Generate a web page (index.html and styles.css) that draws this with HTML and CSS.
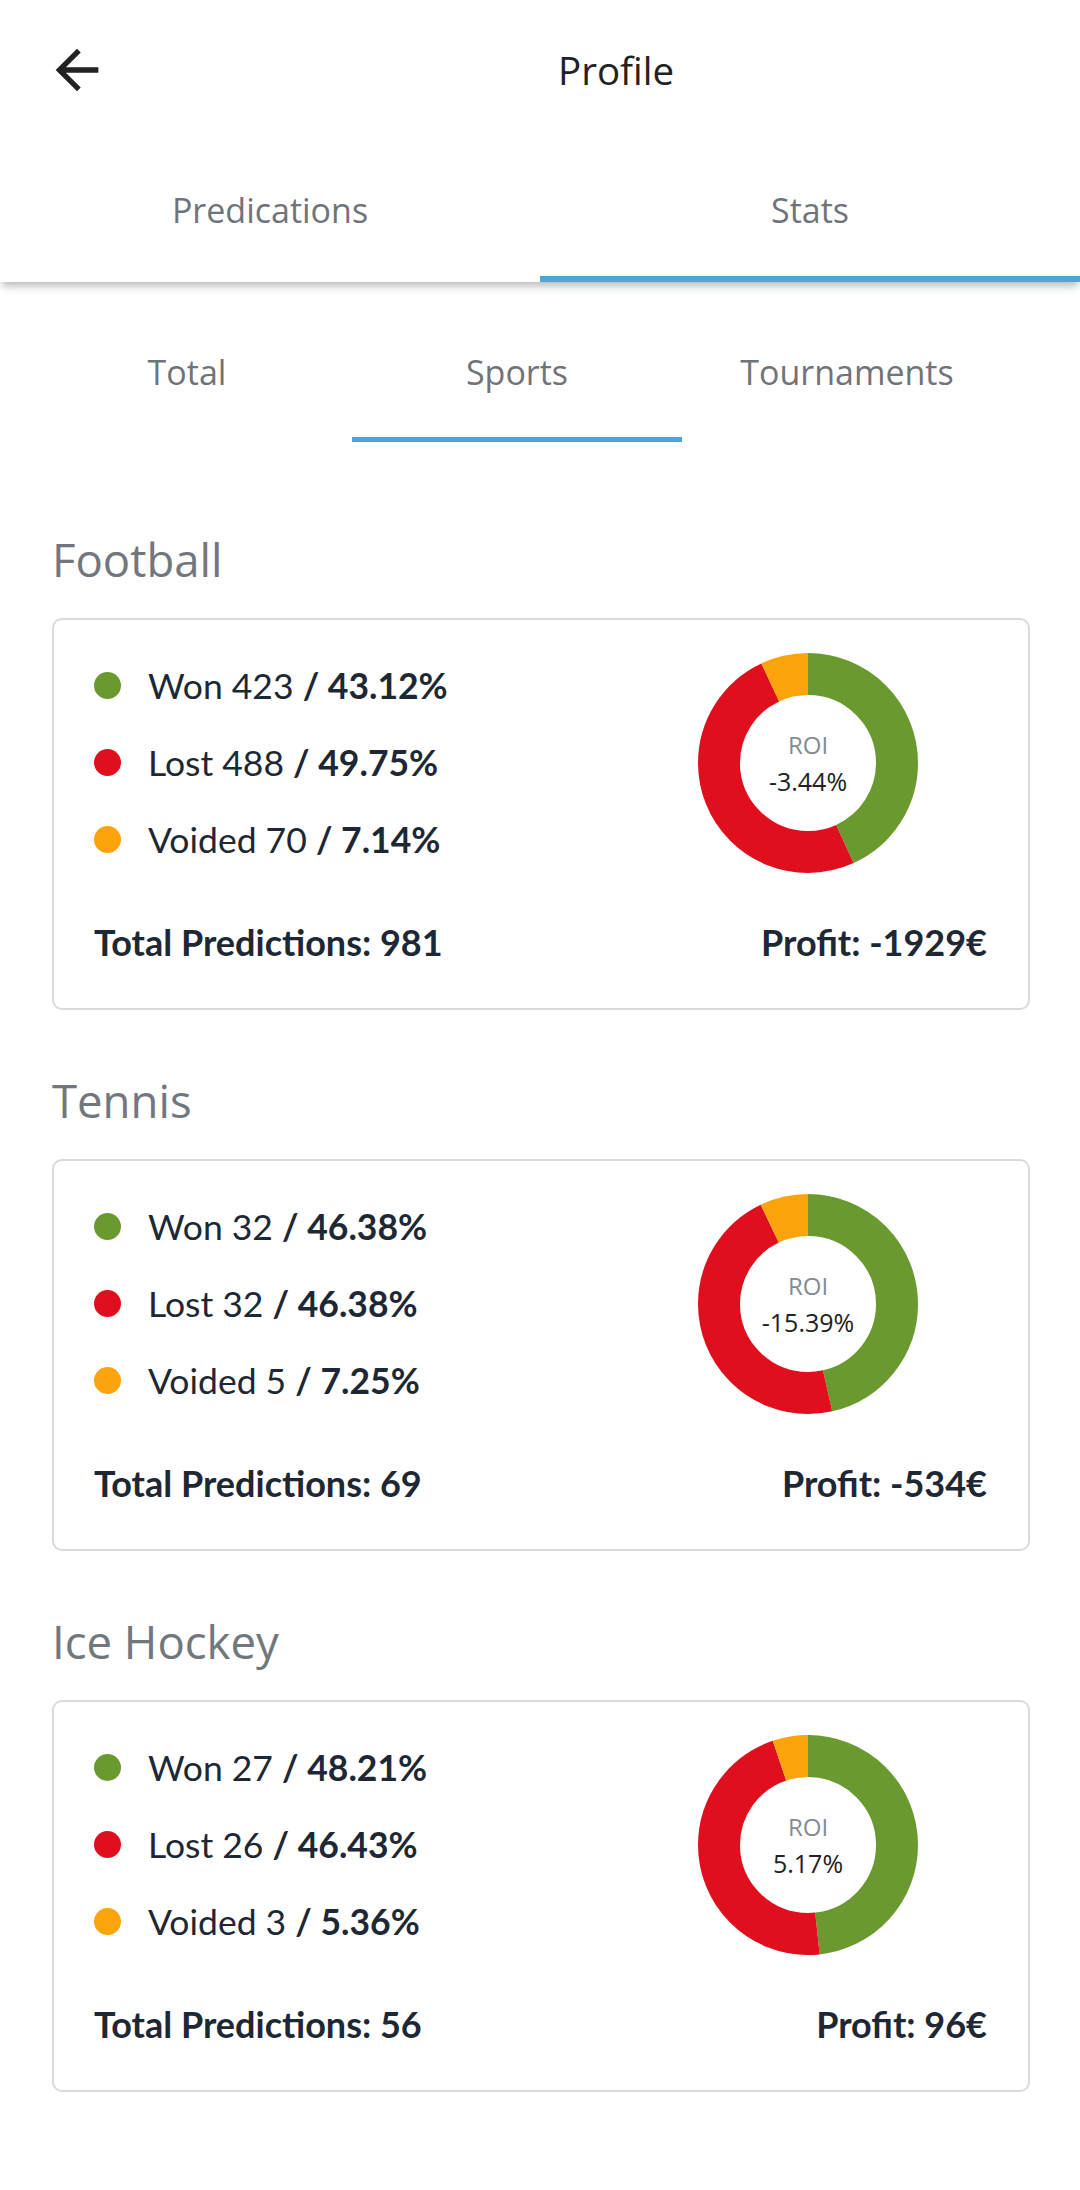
FILE: index.html
```html
<!DOCTYPE html>
<html lang="en">
<head>
<meta charset="utf-8">
<title>Profile</title>
<link rel="stylesheet" href="styles.css">
</head>
<body>
<header class="toolbar">
  <svg class="back" viewBox="0 0 24 24" aria-hidden="true"><path d="M20 11H7.83l5.59-5.59L12 4l-8 8 8 8 1.41-1.41L7.83 13H20v-2z"/></svg>
  <h1 class="title">Profile</h1>
</header>
<nav class="tabs">
  <div class="tab">Predications</div>
  <div class="tab active">Stats</div>
</nav>
<nav class="subtabs">
  <div class="subtab">Total</div>
  <div class="subtab active">Sports</div>
  <div class="subtab">Tournaments</div>
</nav>

<main class="content">
  <section class="sport">
    <h2 class="sport-title">Football</h2>
    <div class="card">
      <div class="card-top">
        <ul class="legend">
          <li class="row"><span class="dot won"></span>Won 423 <b>/ 43.12%</b></li>
          <li class="row"><span class="dot lost"></span>Lost 488 <b>/ 49.75%</b></li>
          <li class="row"><span class="dot void"></span>Voided 70 <b>/ 7.14%</b></li>
        </ul>
        <div class="donut">
          <svg viewBox="0 0 220 220">
            <g transform="rotate(-90 110 110)">
              <circle class="seg won" cx="110" cy="110" r="89" stroke-dasharray="241.13 559.2" stroke-dashoffset="0"/>
              <circle class="seg lost" cx="110" cy="110" r="89" stroke-dasharray="278.2 559.2" stroke-dashoffset="-241.13"/>
              <circle class="seg void" cx="110" cy="110" r="89" stroke-dasharray="39.93 559.2" stroke-dashoffset="-519.33"/>
            </g>
          </svg>
          <div class="roi"><span class="roi-label">ROI</span><span class="roi-value">-3.44%</span></div>
        </div>
      </div>
      <div class="card-foot">
        <span>Total Predictions: 981</span>
        <span>Profit: -1929€</span>
      </div>
    </div>
  </section>

  <section class="sport">
    <h2 class="sport-title">Tennis</h2>
    <div class="card">
      <div class="card-top">
        <ul class="legend">
          <li class="row"><span class="dot won"></span>Won 32 <b>/ 46.38%</b></li>
          <li class="row"><span class="dot lost"></span>Lost 32 <b>/ 46.38%</b></li>
          <li class="row"><span class="dot void"></span>Voided 5 <b>/ 7.25%</b></li>
        </ul>
        <div class="donut">
          <svg viewBox="0 0 220 220">
            <g transform="rotate(-90 110 110)">
              <circle class="seg won" cx="110" cy="110" r="89" stroke-dasharray="259.36 559.2" stroke-dashoffset="0"/>
              <circle class="seg lost" cx="110" cy="110" r="89" stroke-dasharray="259.36 559.2" stroke-dashoffset="-259.36"/>
              <circle class="seg void" cx="110" cy="110" r="89" stroke-dasharray="40.54 559.2" stroke-dashoffset="-518.72"/>
            </g>
          </svg>
          <div class="roi"><span class="roi-label">ROI</span><span class="roi-value">-15.39%</span></div>
        </div>
      </div>
      <div class="card-foot">
        <span>Total Predictions: 69</span>
        <span>Profit: -534€</span>
      </div>
    </div>
  </section>

  <section class="sport">
    <h2 class="sport-title">Ice Hockey</h2>
    <div class="card">
      <div class="card-top">
        <ul class="legend">
          <li class="row"><span class="dot won"></span>Won 27 <b>/ 48.21%</b></li>
          <li class="row"><span class="dot lost"></span>Lost 26 <b>/ 46.43%</b></li>
          <li class="row"><span class="dot void"></span>Voided 3 <b>/ 5.36%</b></li>
        </ul>
        <div class="donut">
          <svg viewBox="0 0 220 220">
            <g transform="rotate(-90 110 110)">
              <circle class="seg won" cx="110" cy="110" r="89" stroke-dasharray="269.59 559.2" stroke-dashoffset="0"/>
              <circle class="seg lost" cx="110" cy="110" r="89" stroke-dasharray="259.64 559.2" stroke-dashoffset="-269.59"/>
              <circle class="seg void" cx="110" cy="110" r="89" stroke-dasharray="29.97 559.2" stroke-dashoffset="-529.23"/>
            </g>
          </svg>
          <div class="roi"><span class="roi-label">ROI</span><span class="roi-value">5.17%</span></div>
        </div>
      </div>
      <div class="card-foot">
        <span>Total Predictions: 56</span>
        <span>Profit: 96€</span>
      </div>
    </div>
  </section>
</main>
</body>
</html>
```

FILE: styles.css
```css
* { box-sizing: border-box; }

html, body {
  margin: 0;
  padding: 0;
  background: #ffffff;
}

body {
  width: 1080px;
  min-height: 2190px;
  font-family: "Open Sans", "Noto Sans", sans-serif;
  color: #212121;
}

/* Toolbar */
.toolbar {
  height: 140px;
  display: flex;
  align-items: center;
  padding-left: 45px;
}

.back {
  width: 64px;
  height: 64px;
  fill: #222222;
  flex: none;
}

.title {
  margin: 0 0 0 449px;
  font-size: 38.5px;
  font-weight: 400;
  line-height: 1;
  color: #222222;
}

/* Main tabs */
.tabs {
  position: relative;
  z-index: 2;
  display: flex;
  height: 142px;
  background: #ffffff;
  box-shadow: 0 6px 8px -2px rgba(0, 0, 0, 0.28);
}

.tab {
  flex: 1;
  display: flex;
  align-items: center;
  justify-content: center;
  padding-top: 4px;
  font-size: 34px;
  color: #6f747a;
  border-bottom: 6px solid transparent;
}

.tab.active {
  border-bottom-color: #4ea6d6;
}

/* Sub tabs */
.subtabs {
  display: flex;
  padding-left: 22px;
  height: 160px;
}

.subtab {
  width: 330px;
  display: flex;
  align-items: center;
  justify-content: center;
  padding-top: 24px;
  font-size: 34px;
  color: #6f747a;
  border-bottom: 5px solid transparent;
}

.subtab.active {
  border-bottom-color: #4ea6d6;
}

/* Sports */
.content {
  padding: 87px 50px 0 52px;
}

.sport {
  margin-bottom: 60px;
}

.sport-title {
  margin: 0 0 29px;
  height: 60px;
  line-height: 60px;
  font-size: 45.5px;
  font-weight: 400;
  color: #72777d;
}

.card {
  height: 392px;
  border: 2px solid #dadada;
  border-radius: 10px;
  padding: 0 41px 0 40px;
  font-family: "Lato", "Open Sans", sans-serif;
  color: #1e2835;
}

.card-top {
  display: flex;
  align-items: center;
  justify-content: space-between;
  padding-top: 27px;
}

.legend {
  list-style: none;
  margin: 0;
  padding: 0;
}

.row {
  display: flex;
  align-items: center;
  height: 77px;
  font-size: 35.5px;
  white-space: pre;
}

.row b {
  font-weight: 700;
}

.dot {
  width: 27px;
  height: 27px;
  border-radius: 50%;
  margin-right: 27px;
  flex: none;
}

.dot.won { background: #6a9a2f; }
.dot.lost { background: #e00f1e; }
.dot.void { background: #fda40d; }

.donut {
  position: relative;
  width: 220px;
  height: 220px;
  margin-right: 69px;
}

.donut svg {
  display: block;
  width: 220px;
  height: 220px;
}

.seg {
  fill: none;
  stroke-width: 42;
}

.seg.won { stroke: #6a9a2f; }
.seg.lost { stroke: #e00f1e; }
.seg.void { stroke: #fda40d; }

.roi {
  position: absolute;
  inset: 0;
  display: flex;
  flex-direction: column;
  align-items: center;
  justify-content: center;
  font-family: "Open Sans", sans-serif;
}

.roi-label {
  font-size: 24px;
  line-height: 36px;
  color: #868b91;
}

.roi-value {
  font-size: 25px;
  line-height: 36px;
  color: #222222;
}

.card-foot {
  display: flex;
  justify-content: space-between;
  align-items: center;
  height: 50px;
  margin-top: 39px;
  font-size: 36px;
  font-weight: 700;
}
```
